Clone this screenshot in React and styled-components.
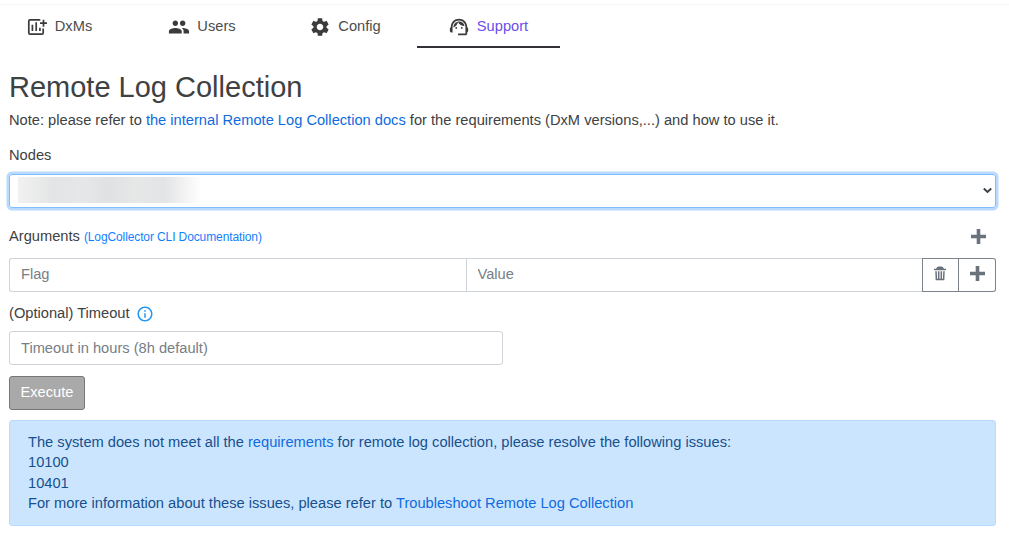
import React from "react";
import styled, { createGlobalStyle } from "styled-components";
import { MdPeople, MdSettings, MdSupportAgent, MdOutlineInfo } from "react-icons/md";

const Global = createGlobalStyle`
  * { box-sizing: border-box; }
  body {
    margin: 0;
    background: #fff;
    color: #404142;
    font: 14.66px/20.5px "Liberation Sans", Arial, sans-serif;
    overflow: hidden;
  }
  input, button { font: inherit; }
`;

const Page = styled.div`
  height: 536px;
  padding-top: 4px;
`;

const Tabs = styled.nav`
  display: flex;
  height: 44px;
  margin-left: -12px;
  box-shadow: inset 0 1px #f5f5f5;
`;

const Tab = styled.a`
  display: flex;
  justify-content: center;
  width: 143px;
  padding: 12px 1px 0 0;
  gap: 7px;
  color: ${(p) => (p.$active ? "#6a4fe8" : "#4c4d4e")};
  border-bottom: 2px solid ${(p) => (p.$active ? "#323135" : "transparent")};
  svg { width: 22px; height: 22px; color: #3b3b3c; }
`;

const Main = styled.main`
  display: flex;
  flex-direction: column;
  padding: 22px 13px 0 9px;
`;

const Title = styled.h1`
  margin: 0;
  font-size: 29px;
  font-weight: 400;
  line-height: 34px;
`;

const Note = styled.p`
  margin: 6px 0 14px;
`;

const Link = styled.a`
  color: ${(p) => (p.$bright ? "#117fff" : "#0f6be0")};
  font-size: ${(p) => (p.$small ? "12px" : "inherit")};
  letter-spacing: ${(p) => (p.$small ? "-0.11px" : "normal")};
`;

const Label = styled.label`
  display: flex;
  align-items: center;
  height: 21px;
`;

const NodeSelect = styled.div`
  display: flex;
  align-items: center;
  justify-content: space-between;
  height: 34px;
  margin: 8px 0 18px;
  padding: 0 3px 0 8px;
  border: 1px solid #80bdff;
  border-radius: 3px;
  box-shadow: 0 0 0 2.5px #b9daff;
`;

const Redacted = styled.span`
  width: 184px;
  height: 26px;
  margin-bottom: 2px;
  background: linear-gradient(90deg, #f1f1f1, #e3e4e5 20%, #e6e7e8 36%, #e0e1e2 50%, #e6e7e7 64%, #e3e4e5 80%, #f2f2f2 90%, #fff);
`;

const ArgumentsHead = styled.div`
  display: flex;
  align-items: center;
  justify-content: space-between;
  height: 22px;
  padding-right: 10px;
`;

const ArgumentsLabel = styled.span`
  display: flex;
  gap: 4px;
  align-items: baseline;
`;

const InputGroup = styled.div`
  display: flex;
  height: 34px;
  margin: 10px 0 11px;
`;

const Field = styled.input`
  flex: ${(p) => (p.$width ? "none" : "1 1 0")};
  width: ${(p) => p.$width || "0"};
  min-width: 0;
  height: 34px;
  padding: 0 11px 2px;
  border: 1px solid #ced4da;
  border-radius: ${(p) => p.$radius || "3px"};
  border-right-width: ${(p) => (p.$joined ? 0 : "1px")};
  background: #fff;
  outline: none;
  &::placeholder { color: #777e85; opacity: 1; }
`;

const IconButton = styled.button`
  display: flex;
  align-items: center;
  justify-content: center;
  width: 37px;
  height: 34px;
  padding: 0 ${(p) => (p.$last ? 0 : "1px")} 3px 0;
  color: #69727b;
  background: #fff;
  border: 1px solid #7b8289;
  border-left-width: ${(p) => (p.$last ? 0 : "1px")};
  border-radius: ${(p) => (p.$last ? "0 3px 3px 0" : 0)};
`;

const InfoIcon = styled(MdOutlineInfo)`
  width: 18px;
  height: 18px;
  margin: 2px 0 0 6px;
  color: #2196f3;
`;

const TimeoutField = styled(Field)`
  margin: 7px 0 11px;
  padding-bottom: 0;
`;

const Execute = styled.button`
  width: 76px;
  height: 34px;
  padding: 0;
  color: #fff;
  background: #a9a9a9;
  border: 1px solid #777;
  border-radius: 3px;
`;

const Alert = styled.section`
  height: 106px;
  margin-top: 10px;
  padding: 11px 18px;
  color: #16508d;
  background: #cce5ff;
  border: 1px solid #b8daff;
  border-radius: 3px;
`;

const Line = styled.div`
  height: 20.5px;
`;

const AddChart = () => (
  <svg viewBox="0 0 22 22" fill="none" stroke="currentColor" strokeWidth="1.7">
    <path d="M14.300 3.900H4a1.200 1.200 0 0 0-1.200 1.200v11.800a1.200 1.200 0 0 0 1.200 1.200h12a1.200 1.200 0 0 0 1.200-1.200v-4.400" />
    <path d="M6.400 8.700v6.300M10.200 6.300v8.700M13.900 11.700v3.300" />
    <path d="M17.500 3.700v7M14 7.200h7" />
  </svg>
);

const Plus = () => (
  <svg width="15" height="15" viewBox="0 0 15 15" fill="#6a727b">
    <path d="M5.7 0h3.600v5.700H15v3.600H9.300V15H5.700V9.300H0V5.700h5.700z" />
  </svg>
);

const Trash = () => (
  <svg width="12" height="15" viewBox="0 0 12 15" fill="none" stroke="currentColor">
    <path d="M0 3.500h12" strokeWidth="1.500" />
    <path d="M2 3Q3 .6 4.500 .6h3Q9 .6 10 3z" fill="currentColor" stroke="none" />
    <path d="M2 5.300l.4 8.200h7.200l.4-8.200M4.700 5.300v8M7.300 5.300v8" strokeWidth="1.500" />
  </svg>
);

const Chevron = () => (
  <svg width="9" height="7" viewBox="0 0 9 7" fill="none" stroke="#3b4045" strokeWidth="1.900">
    <path d="M.8 1.500L4.500 5 8.200 1.500" />
  </svg>
);

const tabs = [
  { label: "DxMs", Icon: AddChart },
  { label: "Users", Icon: MdPeople },
  { label: "Config", Icon: MdSettings },
  { label: "Support", Icon: MdSupportAgent, active: true },
];

export default function App() {
  return (
    <Page>
      <Global />
      <Tabs>
        {tabs.map(({ label, Icon, active }) => (
          <Tab key={label} $active={active}>
            <Icon />
            <span>{label}</span>
          </Tab>
        ))}
      </Tabs>
      <Main>
        <Title>Remote Log Collection</Title>
        <Note>
          Note: please refer to <Link>the internal Remote Log Collection docs</Link> for the
          requirements (DxM versions,...) and how to use it.
        </Note>
        <Label>Nodes</Label>
        <NodeSelect>
          <Redacted />
          <Chevron />
        </NodeSelect>
        <ArgumentsHead>
          <ArgumentsLabel>
            Arguments <Link $bright $small>(LogCollector CLI Documentation)</Link>
          </ArgumentsLabel>
          <Plus />
        </ArgumentsHead>
        <InputGroup>
          <Field placeholder="Flag" $radius="3px 0 0 3px" $joined />
          <Field placeholder="Value" $radius="0" $joined />
          <IconButton aria-label="Remove argument"><Trash /></IconButton>
          <IconButton aria-label="Add argument" $last><Plus /></IconButton>
        </InputGroup>
        <Label>(Optional) Timeout <InfoIcon /></Label>
        <TimeoutField placeholder="Timeout in hours (8h default)" $width="494px" />
        <Execute>Execute</Execute>
        <Alert>
          <Line>
            The system does not meet all the <Link>requirements</Link> for remote log collection,
            please resolve the following issues:
          </Line>
          <Line>10100</Line>
          <Line>10401</Line>
          <Line>
            For more information about these issues, please refer to{" "}
            <Link>Troubleshoot Remote Log Collection</Link>
          </Line>
        </Alert>
      </Main>
    </Page>
  );
}
